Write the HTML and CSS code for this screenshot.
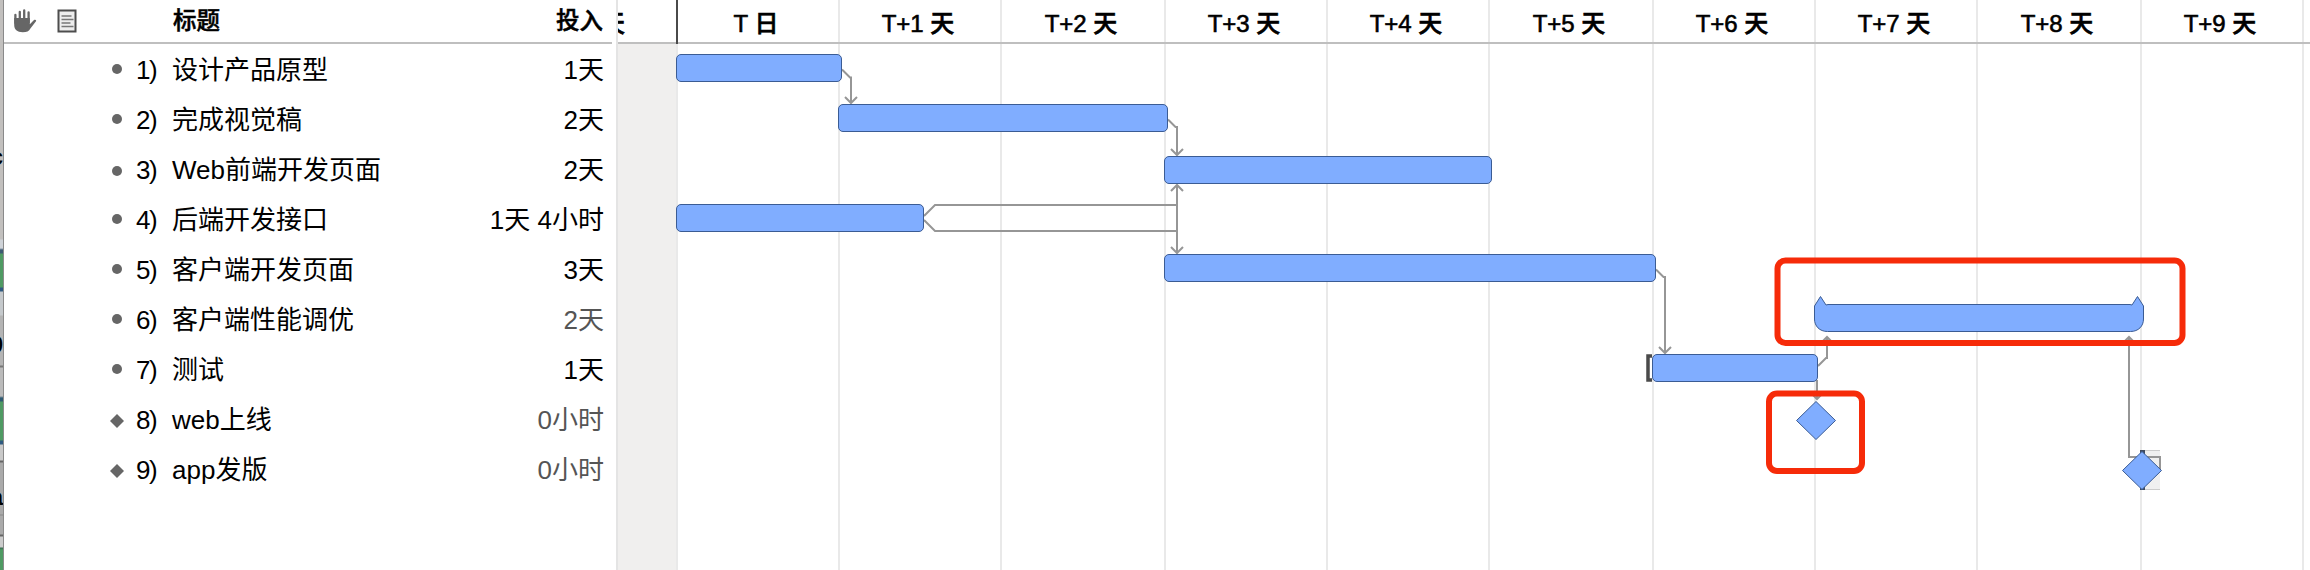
FILE: index.html
```html
<!DOCTYPE html>
<html lang="zh-CN">
<head>
<meta charset="utf-8">
<title>项目计划</title>
<link rel="stylesheet" href="styles.css">
</head>
<body>
<div class="app">
  <div class="backdrop">
    <span class="peek peek-a">c</span>
    <span class="peek peek-b">9</span>
    <span class="peek peek-c">a</span>
  </div>

  <section class="outline">
    <header class="outline-head">
      <svg class="icon-hand" viewBox="0 0 24 24" width="24" height="24">
        <path d="M2.400 6v8M6.800 3v10M11.200 1.400v11M15.600 3.400v10" fill="none" stroke="#666" stroke-width="2.300" stroke-linecap="round"/>
        <path d="M1.200 9h15.600v6.200l4.200-4.200c1.500-1 2.800.2 1.800 1.600l-5.400 6.800c-1.400 2.600-3.600 3.800-7.600 3.800C4 23.200 1.200 20.500 1.200 16z" fill="#666"/>
      </svg>
      <svg class="icon-note" viewBox="0 0 20 24" width="20" height="24">
        <rect x="1.500" y="1.500" width="17" height="21" fill="#ededed" stroke="#4d4d4d" stroke-width="2"/>
        <path d="M4.500 7h10M4.500 10.500h12M4.500 14h9M4.500 17.500h12" stroke="#777" stroke-width="1.500"/>
      </svg>
      <span class="head-title">标题</span>
      <span class="head-effort">投入</span>
    </header>
    <ul class="tasks">
      <li class="task"><i class="dot"></i><span class="num">1)</span><span class="name">设计产品原型</span><span class="effort">1天</span></li>
      <li class="task"><i class="dot"></i><span class="num">2)</span><span class="name">完成视觉稿</span><span class="effort">2天</span></li>
      <li class="task"><i class="dot low"></i><span class="num">3)</span><span class="name">Web前端开发页面</span><span class="effort">2天</span></li>
      <li class="task"><i class="dot"></i><span class="num">4)</span><span class="name">后端开发接口</span><span class="effort">1天 4小时</span></li>
      <li class="task"><i class="dot"></i><span class="num">5)</span><span class="name">客户端开发页面</span><span class="effort">3天</span></li>
      <li class="task"><i class="dot"></i><span class="num">6)</span><span class="name">客户端性能调优</span><span class="effort muted">2天</span></li>
      <li class="task"><i class="dot"></i><span class="num">7)</span><span class="name">测试</span><span class="effort">1天</span></li>
      <li class="task"><i class="diamond low"></i><span class="num">8)</span><span class="name">web上线</span><span class="effort muted">0小时</span></li>
      <li class="task"><i class="diamond low"></i><span class="num">9)</span><span class="name">app发版</span><span class="effort muted">0小时</span></li>
    </ul>
  </section>

  <section class="chart">
    <div class="days">
      <div class="day before"><span>天</span></div>
      <div class="day first"><span>T 日</span></div>
      <div class="day"><span>T+1 天</span></div>
      <div class="day"><span>T+2 天</span></div>
      <div class="day"><span>T+3 天</span></div>
      <div class="day"><span>T+4 天</span></div>
      <div class="day"><span>T+5 天</span></div>
      <div class="day"><span>T+6 天</span></div>
      <div class="day"><span>T+7 天</span></div>
      <div class="day"><span>T+8 天</span></div>
      <div class="day"><span>T+9 天</span></div>
      <div class="day"></div>
    </div>
    <svg class="plan" viewBox="616 0 1694 570" width="1694" height="570">
      <path class="rule" d="M618 43H2310"/>
      <path class="today" d="M677 0V44"/>

      <path class="slack" d="M2141 450h19v40h-19z"/>
      <path class="slack-edge" d="M2141 450.500h19M2141 489.500h19"/>
      <path class="limit-end" d="M2140 450h5v40h-5z"/>

      <g class="links">
        <path d="M842 69.500l8 8h1V103M845 97l6 6 6-6"/>
        <path d="M1168 119.500l7.500 7.500h1.500V155M1171 149l6 6 6-6"/>
        <path d="M924 216l11-11H1177M924 220l11 11H1177M1177 185V253M1171 191l6-6 6 6M1171 247l6 6 6-6"/>
        <path d="M1656 269.500l7.500 7.500h1.500V353M1659 347l6 6 6-6"/>
        <path d="M1818 366l8-8h1V337M1821 343l6-6 6 6"/>
        <path d="M1817 380V399M1811 393l6 6 6-6"/>
        <path d="M2160 470V457H2129V337M2123 343l6-6 6 6"/>
      </g>

      <g class="bars">
        <rect x="676.500" y="54.500" width="165" height="27" rx="4.500"/>
        <rect x="838.500" y="104.500" width="329" height="27" rx="4.500"/>
        <rect x="1164.500" y="156.500" width="327" height="27" rx="4.500"/>
        <rect x="676.500" y="204.500" width="247" height="27" rx="4.500"/>
        <rect x="1164.500" y="254.500" width="491" height="27" rx="4.500"/>
        <rect x="1652.500" y="354.500" width="165" height="27" rx="4.500"/>
        <path d="M1814.500 306l6-9.500 5.500 8.500 2-.5H2130l2 .5 5.500-8.500 6 9.500V319c0 7-5 12.500-13 12.500H1827.500c-8 0-13-5.500-13-12.500z"/>
        <path d="M1816 401.500l19.500 19-19.500 19-19.500-19z"/>
        <path d="M2142 451.500l19.500 19-19.500 19-19.500-19z"/>
      </g>

      <path class="limit" d="M1652 356H1648V380H1652"/>

      <g class="marks">
        <rect x="1777.500" y="260.500" width="405" height="82.500" rx="8"/>
        <rect x="1769" y="393.500" width="93" height="77.500" rx="8"/>
      </g>
    </svg>
  </section>
</div>
</body>
</html>
```
FILE: styles.css
```css
* {
  box-sizing: border-box;
}

body {
  margin: 0;
  background: #fff;
  color: #000;
  font-family: "Liberation Sans", "Noto Sans CJK SC", sans-serif;
}

.app {
  display: flex;
  width: 2310px;
  height: 570px;
  overflow: hidden;
}

/* sliver of the window behind */
.backdrop {
  position: relative;
  width: 4px;
  overflow: hidden;
  border-right: 1px solid #8a8a8a;
  background: linear-gradient(
    #c2c0be 0 239px, #cfd3d8 240px 248px, #3c5a72 250px 253px, #4f9a63 254px 287px,
    #2f5a80 288px 291px, #c5c9cc 292px 315px, #b4b4b4 316px 365px, #777 366px 367px,
    #bbb 368px 396px, #2f5a72 398px 401px, #4f9a63 402px 440px, #2f5a80 441px 444px,
    #c9c9c9 445px 460px, #666 461px 462px, #aaa 463px 514px, #888 515px, #aaa 516px 534px,
    #666 535px 536px, #ccc 537px 547px, #3c6a52 548px, #4f9a63 550px);
}

.peek {
  position: absolute;
  right: 0;
  font-size: 24px;
  line-height: 28px;
  font-weight: bold;
}

.peek-a { top: 143px; }
.peek-b { top: 331px; }
.peek-c { top: 483px; }

.outline {
  width: 612px;
  height: 570px;
}

.outline-head {
  display: flex;
  align-items: center;
  width: 608px;
  height: 44px;
  padding: 0 9px 0 9px;
  border-bottom: 2px solid #bfbfbf;
  font-size: 23.500px;
  line-height: 42px;
  font-weight: 500;
  -webkit-text-stroke: 0.5px #000;
}

.icon-hand {
  margin-right: 20px;
}

.icon-note {
  margin-right: 96px;
}

.head-effort {
  margin-left: auto;
}

.tasks {
  margin: 0;
  padding: 0;
  list-style: none;
}

.task {
  display: flex;
  align-items: center;
  width: 600px;
  height: 50px;
  padding-left: 106px;
  font-size: 26px;
  line-height: 47px;
  white-space: nowrap;
}

.task span {
  padding-top: 3px;
}

.dot {
  width: 10px;
  height: 10px;
  margin: 0 14px 0 2px;
  border-radius: 50%;
  background: #666;
}

.diamond {
  width: 14px;
  height: 14px;
  margin-right: 12px;
  background: #666;
  clip-path: polygon(50% 0, 100% 50%, 50% 100%, 0 50%);
}

.low {
  transform: translateY(2px);
}

.num {
  width: 36px;
  letter-spacing: -1.500px;
}

.effort {
  margin-left: auto;
}

.muted {
  color: #555;
}

.chart {
  position: relative;
  width: 1694px;
  height: 570px;
}

.days {
  display: grid;
  grid-template-columns: 60px 162px 162px 164px 162px 162px 164px 162px 162px 164px 162px 8px;
  height: 570px;
}

.day {
  padding-right: 4px;
  border-left: 2px solid #e9e9e9;
  font-size: 24px;
  line-height: 48px;
  font-weight: 500;
  text-align: center;
  white-space: nowrap;
  -webkit-text-stroke: 0.6px #000;
}

.before {
  overflow: hidden;
  background: linear-gradient(#fff 44px, #f0efee 44px);
  border-left-color: #e4e4e4;
  text-align: left;
}

.before span {
  margin-left: -17px;
}

.plan {
  position: absolute;
  inset: 0;
}

.rule {
  stroke: #bfbfbf;
  stroke-width: 2;
}

.today {
  stroke: #4a4a4a;
  stroke-width: 2;
}

.links {
  fill: none;
  stroke: #969696;
  stroke-width: 2;
}

.bars {
  fill: #80adff;
  stroke: #3b5c94;
  stroke-width: 1;
}

.limit {
  fill: none;
  stroke: #4a4a4a;
  stroke-width: 3.500;
}

.limit-end {
  fill: #3f4b60;
}

.slack {
  fill: #f0f0f0;
}

.slack-edge {
  stroke: #ccc;
}

.marks {
  fill: none;
  stroke: #f62b09;
  stroke-width: 6;
}
```
